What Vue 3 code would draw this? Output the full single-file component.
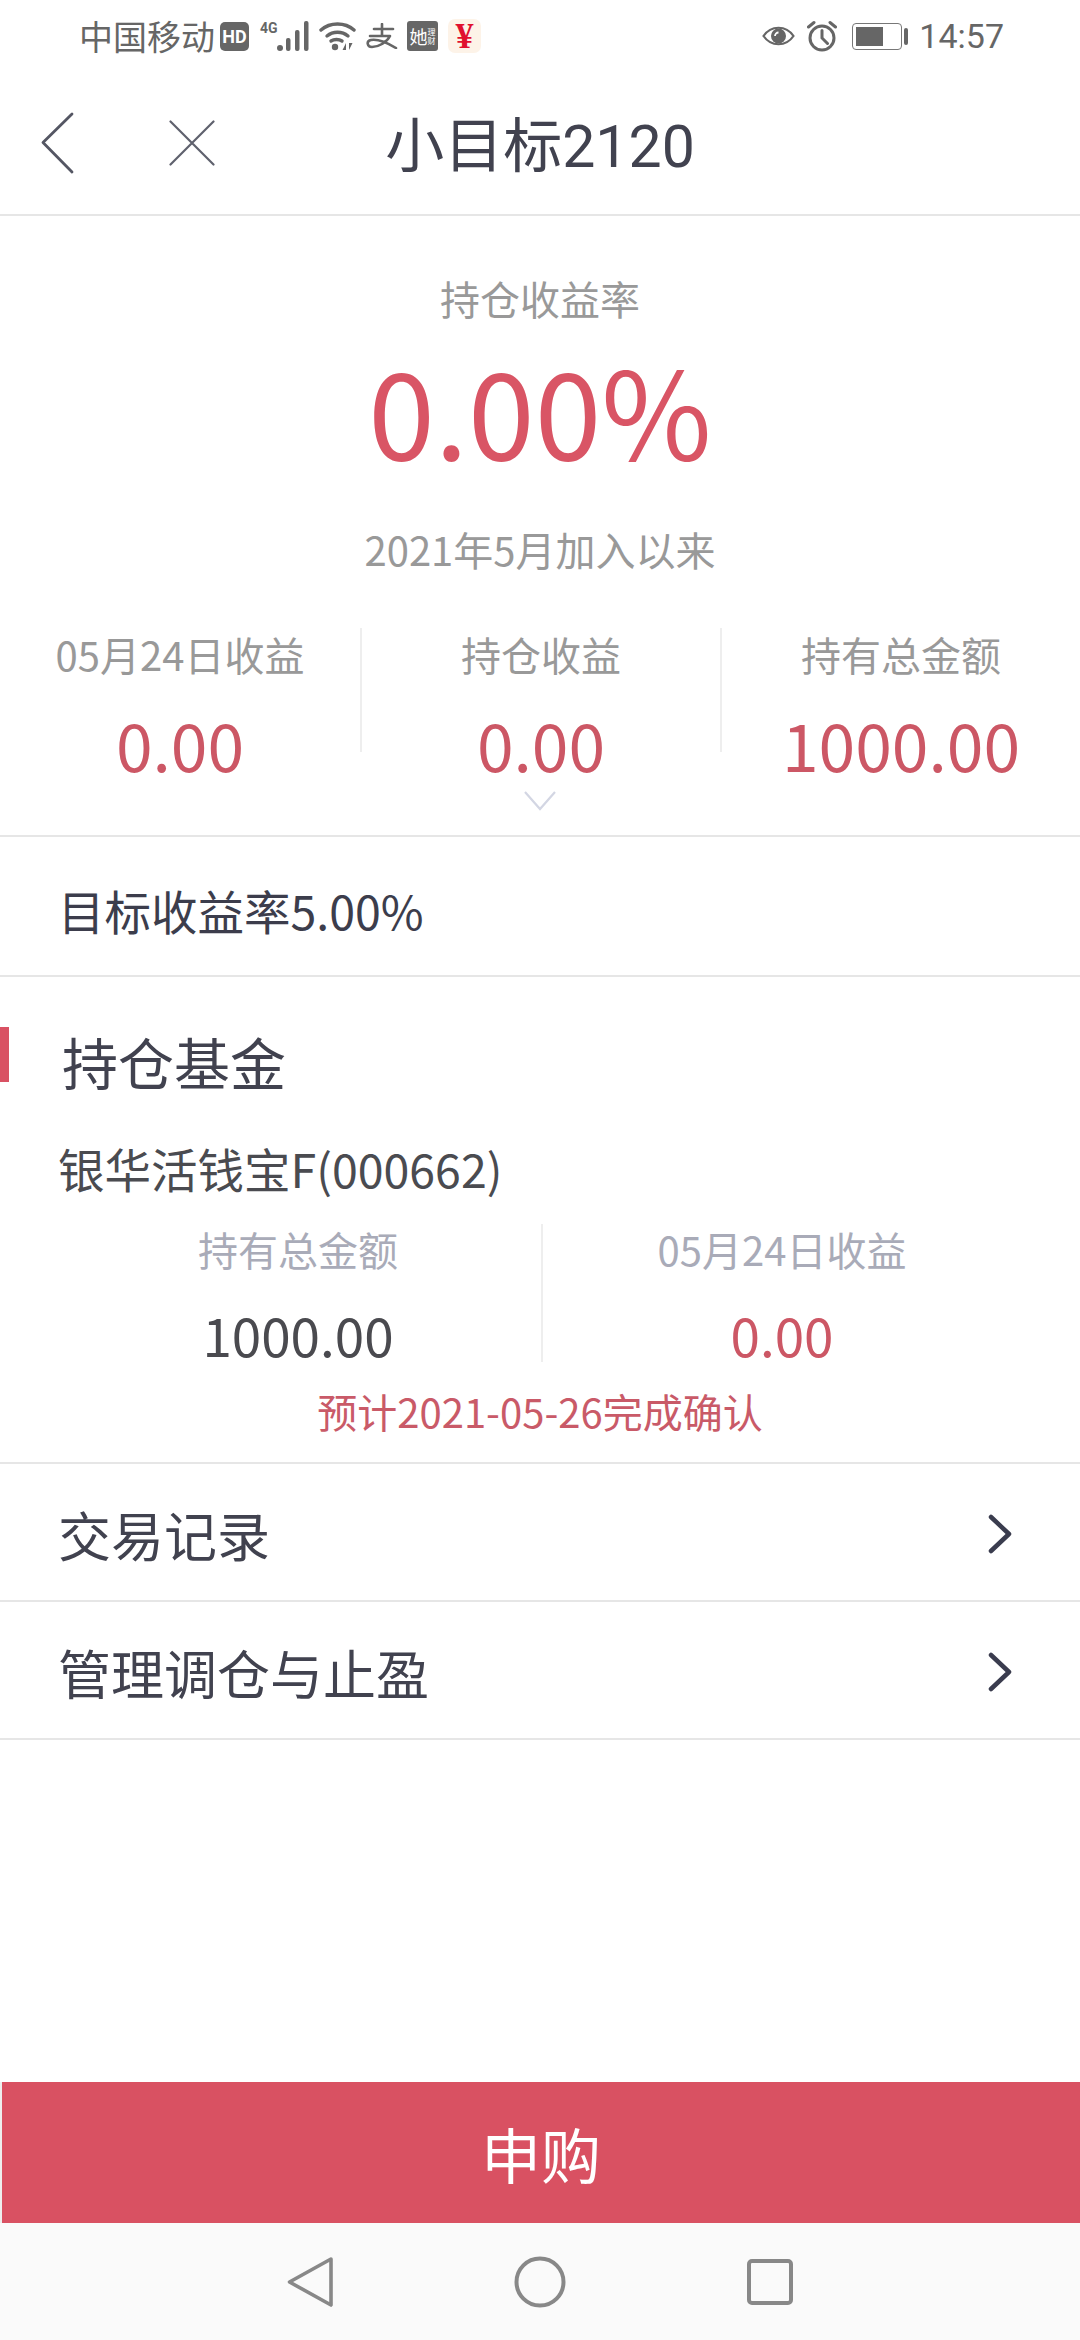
<template>
  <div class="page">
    <div class="status-bar">
      <div class="status-left">
        <span class="carrier">中国移动</span>
        <span class="hd">HD</span>
        <div class="signal">
          <span class="net">4G</span>
          <svg width="33" height="30" viewBox="0 0 33 30">
            <g fill="#666">
              <circle cx="3" cy="27" r="3" />
              <rect x="9" y="17" width="4.500" height="13" rx="2" />
              <rect x="18" y="9" width="4.500" height="21" rx="2" />
              <rect x="27" y="0" width="4.500" height="30" rx="2" />
            </g>
          </svg>
        </div>
        <svg class="wifi" width="37" height="30" viewBox="0 0 37 30">
          <g fill="none" stroke="#666" stroke-width="3.400" stroke-linecap="round">
            <path d="M2 9C11 1 26 1 35 9" />
            <path d="M8 15C14 10 23 10 29 15" />
            <path d="M12 20C15 18 20 18 23 20" />
          </g>
          <circle cx="16" cy="26" r="3.200" fill="#666" />
          <path d="M27 29v-7l-3.500 7zM30 22v7l3.500-7z" fill="#666" />
        </svg>
        <svg class="alipay" width="32" height="26" viewBox="0 0 32 26">
          <g fill="none" stroke="#666" stroke-width="2.600" stroke-linecap="round" stroke-linejoin="round">
            <path d="M8 6H27" />
            <path d="M16 1V12" />
            <path d="M4 13H24C21 19 13 24 6 24C1 24 0 18 5 17C11 16 20 19 30 25" />
          </g>
        </svg>
        <span class="she"><b>她</b><i>理财</i></span>
        <span class="yuan">¥</span>
      </div>
      <div class="status-right">
        <svg width="33" height="24" viewBox="0 0 33 24">
          <path d="M1.500 12C9 1 24 1 31.500 12C24 23 9 23 1.500 12Z" fill="none" stroke="#666" stroke-width="2.200" />
          <circle cx="16.500" cy="12" r="7.500" fill="#666" />
          <path d="M13 12a3.500 3.500 0 0 1 3.500-3.500" fill="none" stroke="#fff" stroke-width="1.800" />
        </svg>
        <svg class="alarm" width="30" height="32" viewBox="0 0 30 32">
          <circle cx="15" cy="18" r="12" fill="none" stroke="#666" stroke-width="3" />
          <path d="M15 10.500V18L20.500 23.500M1.500 7L7 2.500M28.500 7L23 2.500" fill="none" stroke="#666" stroke-width="3" stroke-linecap="round" />
        </svg>
        <div class="battery">
          <div class="battery-body"><div class="battery-level"></div></div>
          <div class="battery-nub"></div>
        </div>
        <span class="time">14:57</span>
      </div>
    </div>

    <header class="nav-bar">
      <div class="nav-icons">
        <svg width="34" height="62" viewBox="0 0 34 62">
          <path d="M31 2L2 30.500L31 60" fill="none" stroke="#545663" stroke-width="2.800" stroke-linecap="round" stroke-linejoin="round" />
        </svg>
        <svg width="46" height="46" viewBox="0 0 46 46">
          <path d="M1.500 1.500L44.500 44.500M44.500 1.500L1.500 44.500" fill="none" stroke="#5f616d" stroke-width="2.200" stroke-linecap="round" />
        </svg>
      </div>
      <div class="nav-title">小目标2120</div>
      <div></div>
    </header>

    <section class="hero">
      <div class="hero-label">持仓收益率</div>
      <div class="hero-rate">0.00%</div>
      <div class="hero-since">2021年5月加入以来</div>
      <div class="stats">
        <div v-for="stat in stats" :key="stat.label" class="stat">
          <div class="stat-label">{{ stat.label }}</div>
          <div class="stat-value">{{ stat.value }}</div>
        </div>
      </div>
      <svg class="expand" width="32" height="20" viewBox="0 0 32 20">
        <path d="M1 1L16 18L31 1" fill="none" stroke="#d3d6e3" stroke-width="2.200" />
      </svg>
    </section>

    <div class="target">目标收益率5.00%</div>

    <section class="holdings">
      <h2 class="section-title">持仓基金</h2>
      <div class="fund-name">银华活钱宝F(000662)</div>
      <div class="fund-stats">
        <div class="fund-stat">
          <div class="fund-label">持有总金额</div>
          <div class="fund-value">1000.00</div>
        </div>
        <div class="fund-stat">
          <div class="fund-label">05月24日收益</div>
          <div class="fund-value red">0.00</div>
        </div>
      </div>
      <div class="confirm">预计2021-05-26完成确认</div>
    </section>

    <div v-for="row in rows" :key="row" class="link-row">
      <span>{{ row }}</span>
      <svg width="25" height="42" viewBox="0 0 25 42">
        <path d="M3 4L21 21L3 38" fill="none" stroke="#3a3c4e" stroke-width="4.500" stroke-linecap="round" stroke-linejoin="round" />
      </svg>
    </div>

    <div class="spacer"></div>

    <button class="buy">申购</button>

    <div class="system-nav">
      <svg width="46" height="52" viewBox="0 0 46 52">
        <path d="M44 3L2.500 26L44 49Z" fill="none" stroke="#888" stroke-width="3.600" stroke-linejoin="round" />
      </svg>
      <svg width="52" height="52" viewBox="0 0 52 52">
        <circle cx="26" cy="26" r="23.500" fill="none" stroke="#888" stroke-width="4" />
      </svg>
      <svg width="46" height="46" viewBox="0 0 46 46">
        <rect x="2" y="2" width="42" height="42" rx="3" fill="none" stroke="#888" stroke-width="4" />
      </svg>
    </div>
  </div>
</template>

<script setup>
const stats = [
  { label: '05月24日收益', value: '0.00' },
  { label: '持仓收益', value: '0.00' },
  { label: '持有总金额', value: '1000.00' }
]

const rows = ['交易记录', '管理调仓与止盈']
</script>

<style>
body {
  margin: 0;
  background: #fff;
}
</style>

<style scoped>
.page {
  display: flex;
  flex-direction: column;
  width: 1080px;
  height: 2340px;
  overflow: hidden;
  background: #fff;
  font-family: "Noto Sans CJK SC", sans-serif;
  color: #41424f;
}

.status-bar {
  display: flex;
  justify-content: space-between;
  align-items: center;
  height: 72px;
  padding: 0 76px 0 79px;
  color: #666;
  flex-shrink: 0;
}

.status-left,
.status-right {
  display: flex;
  align-items: center;
}

.carrier {
  font-size: 34px;
  line-height: 44px;
  margin-right: 5px;
}

.hd {
  width: 29px;
  height: 29px;
  border-radius: 5px;
  background: #666;
  color: #fff;
  font-family: Roboto, sans-serif;
  font-size: 18px;
  font-weight: 700;
  line-height: 29px;
  text-align: center;
}

.signal {
  display: flex;
  align-items: flex-start;
  margin-left: 11px;
}

.net {
  width: 17px;
  font-family: Roboto, sans-serif;
  font-size: 14px;
  font-weight: 700;
  line-height: 14px;
}

.wifi {
  margin-left: 9px;
}

.alipay {
  margin-left: 10px;
}

.she {
  display: flex;
  align-items: center;
  justify-content: center;
  width: 31px;
  height: 30px;
  margin-left: 9px;
  border-radius: 3px;
  background: #666;
  color: #fff;
}

.she b {
  font-size: 18px;
  font-weight: 400;
}

.she i {
  width: 8px;
  font-size: 8px;
  font-style: normal;
  line-height: 9px;
}

.yuan {
  width: 33px;
  height: 34px;
  margin-left: 10px;
  border-radius: 7px;
  background: #fdf3e8;
  color: #e0102f;
  font-family: "Liberation Serif", serif;
  font-size: 36px;
  font-weight: 700;
  line-height: 34px;
  text-align: center;
}

.alarm {
  margin-left: 12px;
}

.battery {
  display: flex;
  align-items: center;
  margin-left: 15px;
}

.battery-body {
  width: 50px;
  height: 27px;
  box-sizing: border-box;
  padding: 3px;
  border: 1px solid #777;
  border-radius: 4px;
}

.battery-level {
  width: 27px;
  height: 100%;
  background: #666;
}

.battery-nub {
  width: 4px;
  height: 17px;
  margin-left: 2px;
  border-radius: 2px;
  background: #666;
}

.time {
  margin-left: 11px;
  font-family: Roboto, sans-serif;
  font-size: 34px;
}

.nav-bar {
  display: grid;
  grid-template-columns: 1fr auto 1fr;
  align-items: center;
  height: 144px;
  box-sizing: border-box;
  border-bottom: 2px solid #e6e6e6;
  flex-shrink: 0;
}

.nav-icons {
  display: flex;
  align-items: center;
  gap: 94px;
  padding-left: 41px;
}

.nav-title {
  padding-top: 6px;
  font-family: Roboto, "Noto Sans CJK SC", sans-serif;
  font-size: 59px;
  line-height: 1;
}

.hero {
  position: relative;
  height: 621px;
  box-sizing: border-box;
  padding-top: 57px;
  border-bottom: 2px solid #e6e6e6;
  text-align: center;
  flex-shrink: 0;
}

.hero-label,
.hero-since {
  color: #999;
  font-size: 40px;
  line-height: 50px;
}

.hero-rate {
  margin-top: 10px;
  color: #d95565;
  font-size: 120px;
  line-height: 150px;
}

.hero-since {
  margin-top: 41px;
}

.stats {
  display: grid;
  grid-template-columns: repeat(3, 1fr);
  margin-top: 54px;
}

.stat {
  height: 124px;
}

.stat + .stat {
  border-left: 2px solid #eee;
}

.stat-label {
  color: #999;
  font-size: 40px;
  line-height: 50px;
  margin-top: 1px;
}

.stat-value {
  margin-top: 26px;
  color: #cc5765;
  font-size: 66px;
  line-height: 76px;
}

.expand {
  position: absolute;
  left: 524px;
  top: 575px;
}

.target {
  height: 140px;
  box-sizing: border-box;
  padding-left: 58px;
  border-bottom: 2px solid #e6e6e6;
  color: #3c3d4c;
  font-size: 46.500px;
  line-height: 146px;
  flex-shrink: 0;
}

.holdings {
  height: 487px;
  box-sizing: border-box;
  padding-top: 50px;
  border-bottom: 2px solid #e6e6e6;
  flex-shrink: 0;
}

.section-title {
  height: 55px;
  margin: 0;
  padding-left: 53px;
  border-left: 9px solid #d95163;
  font-size: 56px;
  font-weight: 400;
  line-height: 68px;
}

.fund-name {
  margin-top: 56px;
  padding-left: 58px;
  color: #4a4b50;
  font-size: 46.500px;
  line-height: 60px;
}

.fund-stats {
  display: grid;
  grid-template-columns: 486px 480px;
  margin: 26px 0 0 55px;
}

.fund-stat {
  height: 138px;
  text-align: center;
}

.fund-stat + .fund-stat {
  border-left: 2px solid #eee;
}

.fund-label {
  color: #a9abb8;
  font-size: 40px;
  line-height: 50px;
}

.fund-value {
  margin-top: 30px;
  color: #4a4a4f;
  font-size: 53px;
  line-height: 60px;
}

.fund-value.red {
  color: #cc5765;
}

.confirm {
  margin-top: 24px;
  color: #c95a68;
  font-size: 40px;
  line-height: 50px;
  text-align: center;
}

.link-row {
  display: flex;
  justify-content: space-between;
  align-items: center;
  height: 138px;
  box-sizing: border-box;
  padding: 4px 67px 0 58px;
  border-bottom: 2px solid #e6e6e6;
  font-size: 53px;
  flex-shrink: 0;
}

.spacer {
  flex: 1;
}

.buy {
  display: block;
  width: 100%;
  height: 141px;
  padding: 0;
  border: 0;
  border-left: 2px solid #eee;
  background: #d95162;
  color: #fff;
  font-family: inherit;
  font-size: 60px;
  flex-shrink: 0;
}

.system-nav {
  display: grid;
  grid-template-columns: 46px 52px 46px;
  justify-content: center;
  align-items: center;
  column-gap: 181px;
  height: 117px;
  background: #fafafa;
  flex-shrink: 0;
}
</style>
